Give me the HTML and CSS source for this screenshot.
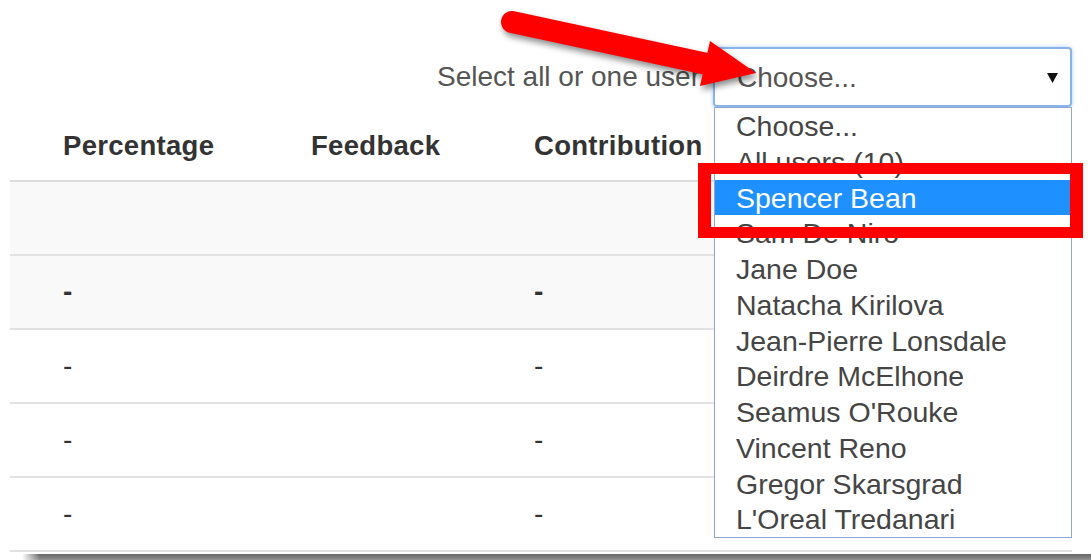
FILE: index.html
```html
<!DOCTYPE html>
<html lang="en">
<head>
<meta charset="utf-8">
<title>Grades by user</title>
<link rel="stylesheet" href="styles.css">
</head>
<body>
<div class="page">
  <div class="toolbar">
    <span class="toolbar-label">Select all or one user</span>
    <div class="user-select">
      <span class="user-select-value">Choose...</span>
      <svg class="caret" width="11" height="10" viewBox="0 0 11 10"><path d="M0 0H11L5.5 10Z" fill="#111"/></svg>
      <ul class="listbox">
        <li class="option">Choose...</li>
        <li class="option">All users (10)</li>
        <li class="option is-active">Spencer Bean</li>
        <li class="option">Sam De Niro</li>
        <li class="option">Jane Doe</li>
        <li class="option">Natacha Kirilova</li>
        <li class="option">Jean-Pierre Lonsdale</li>
        <li class="option">Deirdre McElhone</li>
        <li class="option">Seamus O'Rouke</li>
        <li class="option">Vincent Reno</li>
        <li class="option">Gregor Skarsgrad</li>
        <li class="option">L'Oreal Tredanari</li>
      </ul>
    </div>
  </div>

  <div class="grades">
    <div class="grades-row grades-head">
      <span>Percentage</span>
      <span>Feedback</span>
      <span>Contribution</span>
    </div>
    <div class="grades-row is-shaded"><span></span><span></span><span></span></div>
    <div class="grades-row is-shaded is-total"><span>-</span><span></span><span>-</span></div>
    <div class="grades-row"><span>-</span><span></span><span>-</span></div>
    <div class="grades-row"><span>-</span><span></span><span>-</span></div>
    <div class="grades-row"><span>-</span><span></span><span>-</span></div>
  </div>
  <div class="page-shadow"></div>

  <div class="callout-box"></div>
  <svg class="callout-arrow" width="1091" height="560" viewBox="0 0 1091 560">
    <line x1="512" y1="22" x2="707" y2="64" stroke="#ff0000" stroke-width="22" stroke-linecap="round"/>
    <polygon points="710,41 756,73 700,86" fill="#ff0000"/>
  </svg>
</div>
</body>
</html>
```
FILE: styles.css
```css
html, body {
  margin: 0;
  padding: 0;
  background: #ffffff;
}

body {
  font-family: "Liberation Sans", Arial, sans-serif;
  color: #333333;
}

.page {
  position: relative;
  width: 1091px;
  height: 560px;
  overflow: hidden;
}

/* user picker */
.toolbar {
  display: flex;
  justify-content: flex-end;
  align-items: center;
  gap: 13px;
  padding: 47px 19px 0 0;
}

.toolbar-label {
  font-size: 28px;
  color: #555555;
}

.user-select {
  position: relative;
  box-sizing: border-box;
  width: 359px;
  height: 60px;
  display: flex;
  align-items: center;
  padding: 2px 12px 0 22px;
  border: 2px solid #8ab3ea;
  border-radius: 4px;
  box-shadow: 0 0 4px rgba(102, 160, 233, 0.55);
  font-size: 28px;
  color: #555555;
  z-index: 2;
  background: #ffffff;
}

.user-select-value {
  flex: 1;
}

.caret {
  display: block;
}

.listbox {
  position: absolute;
  top: 58px;
  left: -1px;
  box-sizing: border-box;
  width: 358px;
  margin: 0;
  padding: 0;
  list-style: none;
  background: #ffffff;
  border: 1px solid #8da8d8;
}

.option {
  height: 35.75px;
  line-height: 36px;
  padding-left: 21px;
  font-size: 28.5px;
  color: #454545;
  white-space: nowrap;
  overflow: hidden;
}

.option.is-active {
  background: #1e90ff;
  color: #ffffff;
}

/* grades table */
.grades {
  margin: 1px 19px 0 10px;
}

.grades-row {
  box-sizing: border-box;
  height: 74px;
  display: grid;
  grid-template-columns: 248px 223px 1fr;
  align-items: center;
  padding-left: 53px;
  border-bottom: 2px solid #e2e2e2;
  font-size: 28px;
  color: #333333;
}

.grades-head {
  padding-top: 4px;
  font-size: 27.5px;
  font-weight: bold;
  letter-spacing: 0.3px;
  border-bottom-color: #dddddd;
}

.grades-row.is-shaded {
  background: #f9f9f9;
}

.grades-row.is-total {
  font-weight: bold;
}

.page-shadow {
  position: relative;
  height: 7px;
  margin: 2px 0 0 22px;
  background: linear-gradient(to bottom, #666666, #7d7d7d 50%, #9a9a9a);
}

.page-shadow::before {
  content: "";
  position: absolute;
  left: 0;
  top: 0;
  bottom: 0;
  width: 18px;
  background: linear-gradient(to right, #ffffff, rgba(255, 255, 255, 0));
}

/* annotation overlays */
.callout-box {
  position: absolute;
  left: 698px;
  top: 163px;
  box-sizing: border-box;
  width: 385px;
  height: 75px;
  border-style: solid;
  border-color: #ff0000;
  border-width: 11px 13px;
  z-index: 3;
}

.callout-arrow {
  position: absolute;
  left: 0;
  top: 0;
  z-index: 4;
  pointer-events: none;
  filter: drop-shadow(2px 4px 3px rgba(0, 0, 0, 0.45));
}
```
